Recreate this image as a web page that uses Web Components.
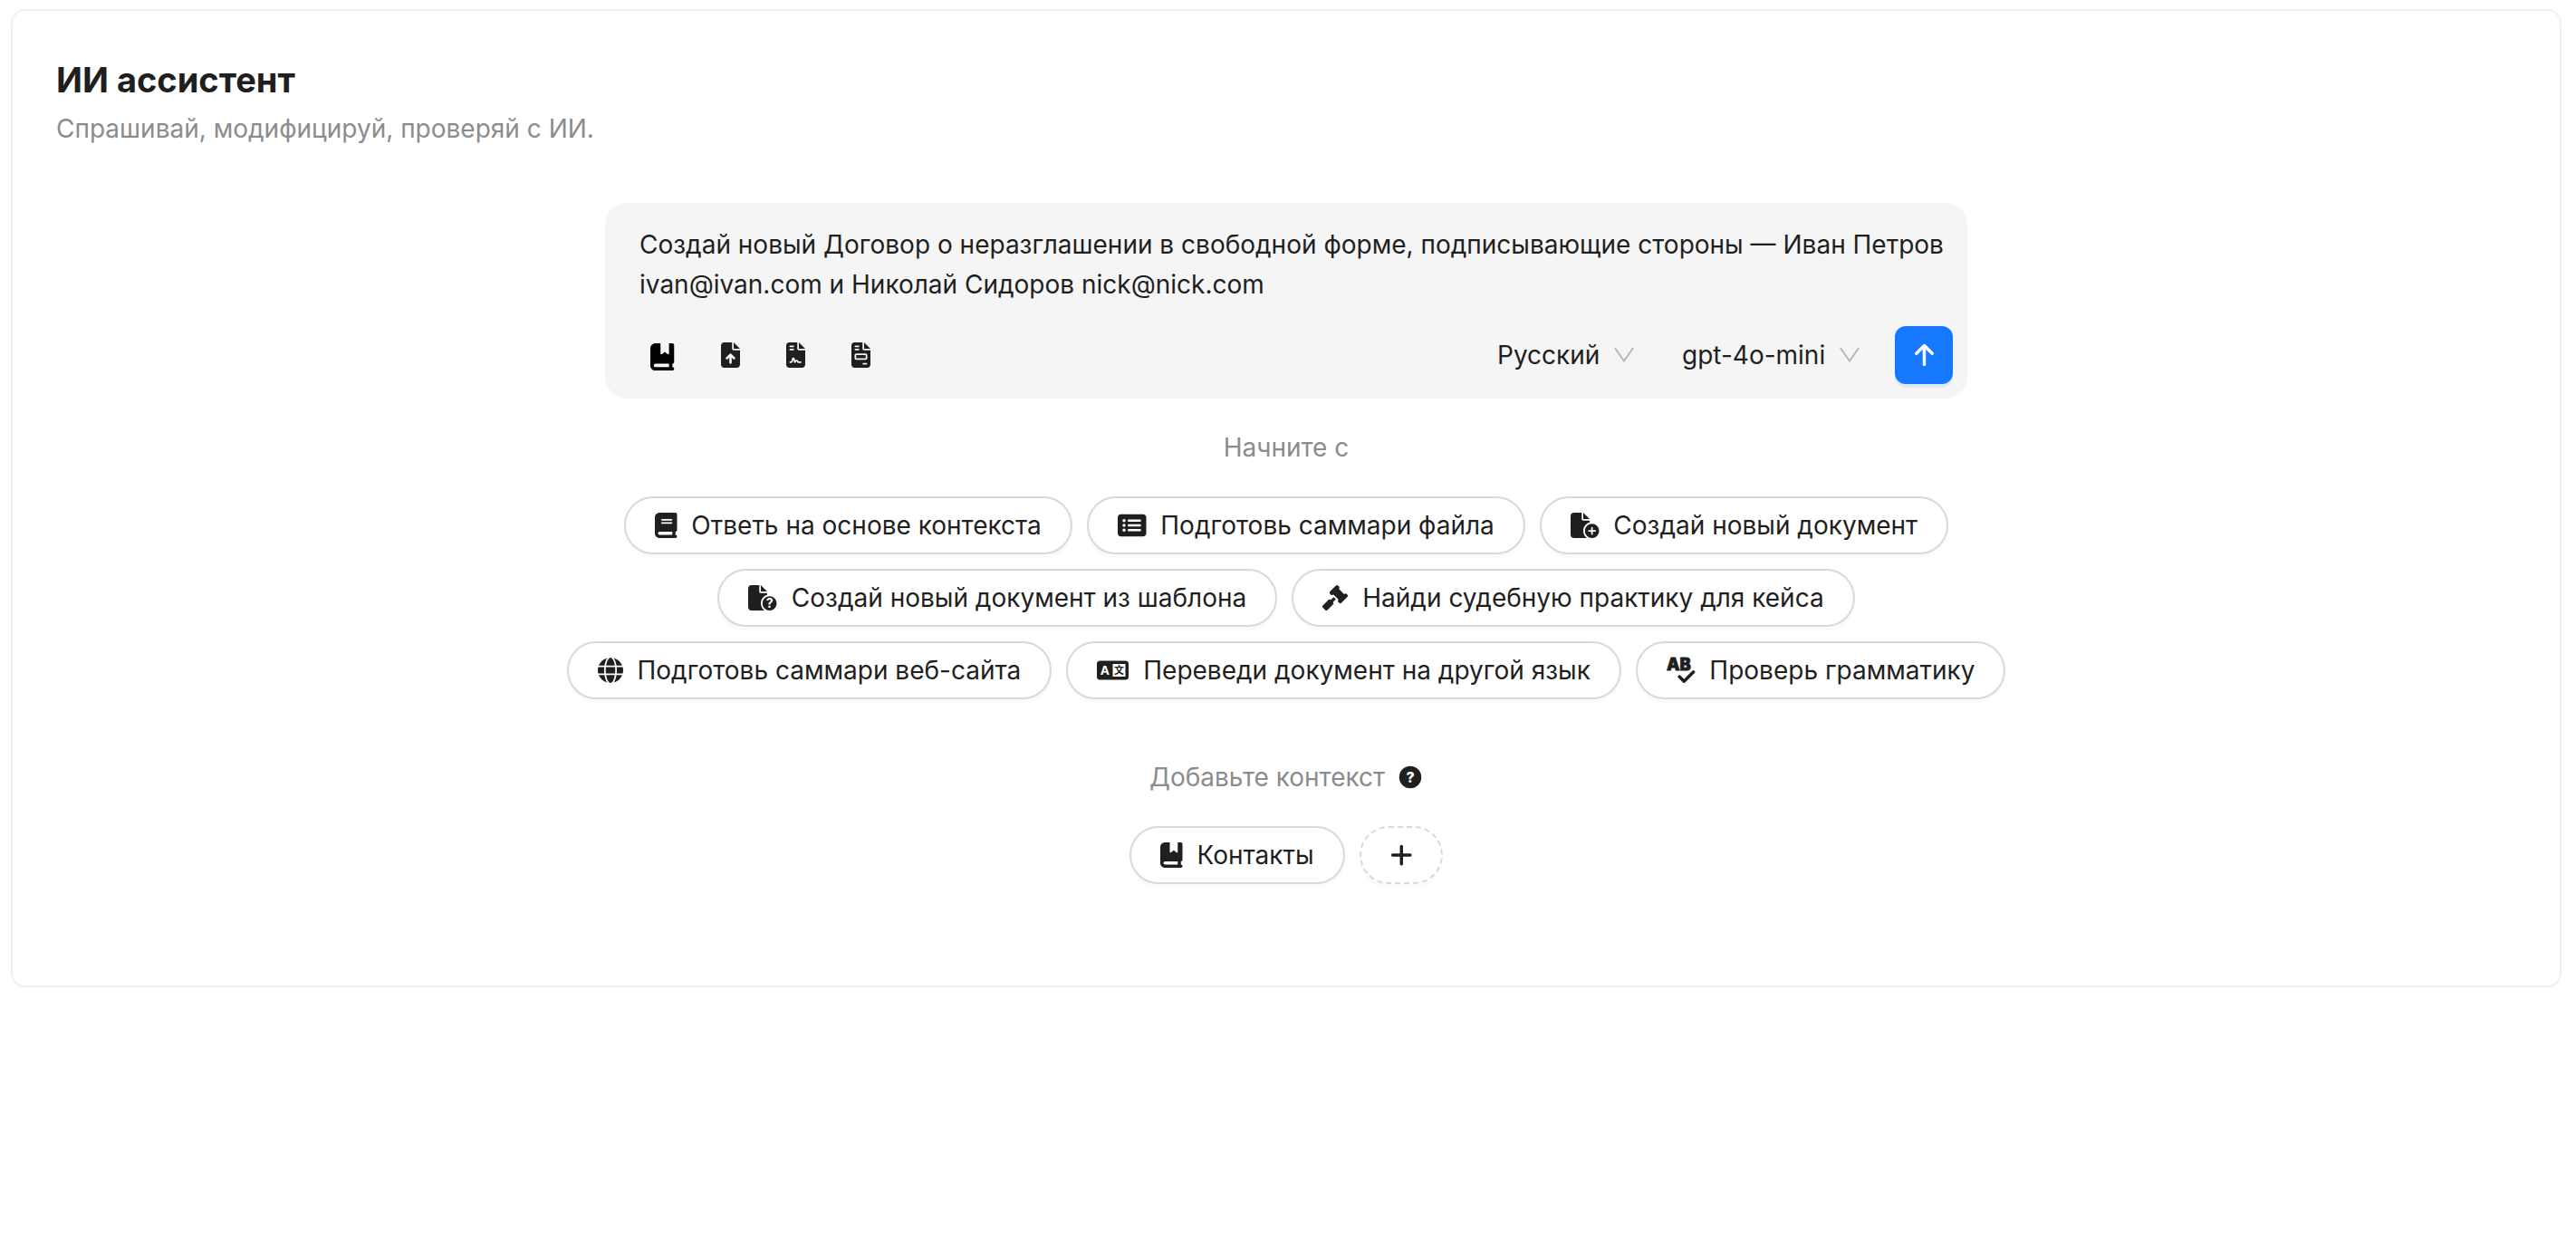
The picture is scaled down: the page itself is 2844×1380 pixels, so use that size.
<!DOCTYPE html>
<html lang="ru">
<head>
<meta charset="utf-8">
<title>ИИ ассистент</title>
<style>
  body {
    margin: 10px 16px 10px 12px;
    background: #fff;
    color: #1f1f1f;
    font: 400 28px/44px Inter, "Noto Sans", sans-serif;
    --muted: #8c8c8c;
    --line: #d9d9d9;
    --primary: #1677ff;
  }
</style>
</head>
<body>
<assistant-card>
  <span slot="title">ИИ ассистент</span>
  <span slot="subtitle">Спрашивай, модифицируй, проверяй с ИИ.</span>
  <prompt-composer></prompt-composer>
  <chip-section>
    <span slot="label">Начните с</span>
    <chip-button icon="book">Ответь на основе контекста</chip-button>
    <chip-button icon="list">Подготовь саммари файла</chip-button>
    <chip-button icon="file-plus">Создай новый документ</chip-button>
    <chip-button icon="file-question">Создай новый документ из шаблона</chip-button>
    <chip-button icon="gavel">Найди судебную практику для кейса</chip-button>
    <chip-button icon="globe">Подготовь саммари веб-сайта</chip-button>
    <chip-button icon="language">Переведи документ на другой язык</chip-button>
    <chip-button icon="spell-check">Проверь грамматику</chip-button>
  </chip-section>
  <chip-section class="context">
    <span slot="label">Добавьте контекст</span>
    <fa-icon slot="label" name="help"></fa-icon>
    <chip-button icon="bookmark">Контакты</chip-button>
    <chip-button icon="plus" dashed label="Добавить"></chip-button>
  </chip-section>
</assistant-card>

<script>
const PAGE = 'M64 0C28.7 0 0 28.7 0 64L0 448c0 35.3 28.7 64 64 64l256 0c35.3 0 64-28.7 64-64l0-288-128 0c-17.7 0-32-14.3-32-32L224 0 64 0zM256 0l0 128 128 0L256 0z';
const PAGE_LINES = 'M80 64l64 0c8.8 0 16 7.2 16 16s-7.2 16-16 16L80 96c-8.8 0-16-7.2-16-16s7.2-16 16-16zm0 64l64 0c8.8 0 16 7.2 16 16s-7.2 16-16 16l-64 0c-8.8 0-16-7.2-16-16s7.2-16 16-16z';
const PAGE_BADGE = 'M0 64C0 28.7 28.7 0 64 0L224 0l0 128c0 17.7 14.3 32 32 32l128 0 0 38.6C310.1 219.5 256 287.4 256 368c0 59.1 29.1 111.3 73.7 143.3c-3.2 .5-6.4 .7-9.7 .7L64 512c-35.3 0-64-28.7-64-64L0 64zm384 64l-128 0L256 0 384 128zm48 96a144 144 0 1 1 0 288 144 144 0 1 1 0-288z';
const p = d => `<path fill-rule="evenodd" d="${d}"/>`;

// name: [width of the 512-high view box, markup]
const ICONS = {
  book: [448, p('M96 0C43 0 0 43 0 96L0 416c0 53 43 96 96 96l288 0 32 0c17.7 0 32-14.3 32-32s-14.3-32-32-32l0-64c17.7 0 32-14.3 32-32l0-320c0-17.7-14.3-32-32-32L384 0 96 0zm0 384l256 0 0 64L96 448c-17.7 0-32-14.3-32-32s14.3-32 32-32zm32-240c0-8.8 7.2-16 16-16l192 0c8.8 0 16 7.2 16 16s-7.2 16-16 16l-192 0c-8.8 0-16-7.2-16-16zm16 48l192 0c8.8 0 16 7.2 16 16s-7.2 16-16 16l-192 0c-8.8 0-16-7.2-16-16s7.2-16 16-16z')],
  bookmark: [448, p('M0 96C0 43 43 0 96 0l96 0 0 190.7c0 13.4 15.5 20.9 26 12.5L272 160l54 43.2c10.5 8.4 26 .9 26-12.5L352 0l32 0 32 0c17.7 0 32 14.3 32 32l0 320c0 17.7-14.3 32-32 32l0 64c17.7 0 32 14.3 32 32s-14.3 32-32 32l-32 0L96 512c-53 0-96-43-96-96L0 96zM64 416c0 17.7 14.3 32 32 32l256 0 0-64L96 384c-17.7 0-32 14.3-32 32z')],
  'file-up': [384, p(PAGE + 'M216 408c0 13.3-10.7 24-24 24s-24-10.7-24-24l0-102.1-31 31c-9.4 9.4-24.6 9.4-33.9 0s-9.4-24.6 0-33.9l72-72c9.4-9.4 24.6-9.4 33.9 0l72 72c9.4 9.4 9.4 24.6 0 33.9s-24.6 9.4-33.9 0l-31-31L216 408z')],
  'file-contract': [384, p(PAGE + PAGE_LINES + 'M134.2 381.8c-6.1 20.3-24.8 34.2-46 34.2L80 416c-8.8 0-16-7.2-16-16s7.2-16 16-16l8.2 0c7.1 0 13.3-4.6 15.3-11.4l14.9-49.5c3.4-11.3 13.8-19.1 25.6-19.1s22.2 7.7 25.6 19.1l11.6 38.6c7.4-6.2 16.8-9.7 26.8-9.7c15.9 0 30.4 9 37.5 23.2l4.4 8.8 44.1 0c8.8 0 16 7.2 16 16s-7.2 16-16 16l-54 0c-6.1 0-11.6-3.4-14.3-8.8l-8.8-17.7c-1.7-3.4-5.1-5.5-8.8-5.5s-7.2 2.1-8.8 5.5l-8.8 17.7c-2.9 5.9-9.2 9.4-15.7 8.8s-12.1-5.1-13.9-11.3L144 349l-9.8 32.8z')],
  'file-invoice': [384, p(PAGE + PAGE_LINES + 'M96 224l192 0c17.7 0 32 14.3 32 32l0 64c0 17.7-14.3 32-32 32L96 352c-17.7 0-32-14.3-32-32l0-64c0-17.7 14.3-32 32-32zM96 256l0 64 192 0 0-64L96 256zM240 416l64 0c8.8 0 16 7.2 16 16s-7.2 16-16 16l-64 0c-8.8 0-16-7.2-16-16s7.2-16 16-16z')],
  'file-plus': [576, p(PAGE_BADGE + 'M448 304c0-8.8-7.2-16-16-16s-16 7.2-16 16l0 48-48 0c-8.8 0-16 7.2-16 16s7.2 16 16 16l48 0 0 48c0 8.8 7.2 16 16 16s16-7.2 16-16l0-48 48 0c8.8 0 16-7.2 16-16s-7.2-16-16-16l-48 0 0-48z')],
  'file-question': [576, p(PAGE_BADGE) + '<text x="432" y="462" font-size="260" font-weight="700" text-anchor="middle" fill="#fff">?</text>'],
  list: [576, p('M0 96C0 60.7 28.7 32 64 32l448 0c35.3 0 64 28.7 64 64l0 320c0 35.3-28.7 64-64 64L64 480c-35.3 0-64-28.7-64-64L0 96zM128 288a32 32 0 1 0 0-64 32 32 0 1 0 0 64zm32-128a32 32 0 1 0 -64 0 32 32 0 1 0 64 0zM128 384a32 32 0 1 0 0-64 32 32 0 1 0 0 64zm96-248c-13.3 0-24 10.7-24 24s10.7 24 24 24l224 0c13.3 0 24-10.7 24-24s-10.7-24-24-24l-224 0zm0 96c-13.3 0-24 10.7-24 24s10.7 24 24 24l224 0c13.3 0 24-10.7 24-24s-10.7-24-24-24l-224 0zm0 96c-13.3 0-24 10.7-24 24s10.7 24 24 24l224 0c13.3 0 24-10.7 24-24s-10.7-24-24-24l-224 0z')],
  gavel: [512, p('M318.6 9.4c-12.5-12.5-32.8-12.5-45.3 0l-120 120c-12.5 12.5-12.5 32.8 0 45.3l16 16c12.5 12.5 32.8 12.5 45.3 0l4-4L325.4 293.4l-4 4c-12.5 12.5-12.5 32.8 0 45.3l16 16c12.5 12.5 32.8 12.5 45.3 0l120-120c12.5-12.5 12.5-32.8 0-45.3l-16-16c-12.5-12.5-32.8-12.5-45.3 0l-4 4L330.6 74.6l4-4c12.5-12.5 12.5-32.8 0-45.3l-16-16zm-152 288c-12.5-12.5-32.8-12.5-45.3 0l-112 112c-12.5 12.5-12.5 32.8 0 45.3l48 48c12.5 12.5 32.8 12.5 45.3 0l112-112c12.5-12.5 12.5-32.8 0-45.3l-1.4-1.4L272 285.3 226.7 240 168 298.7l-1.4-1.4z')],
  globe: [512, p('M352 256c0 22.2-1.2 43.6-3.3 64l-185.3 0c-2.2-20.4-3.3-41.8-3.3-64s1.2-43.6 3.3-64l185.3 0c2.2 20.4 3.3 41.8 3.3 64zm28.8-64l123.1 0c5.3 20.5 8.1 41.9 8.1 64s-2.8 43.5-8.1 64l-123.1 0c2.1-20.6 3.2-42 3.2-64s-1.1-43.4-3.2-64zm112.6-32l-116.7 0c-10-63.9-29.8-117.4-55.3-151.6c78.3 20.7 142 77.5 171.9 151.6zm-149.1 0l-176.6 0c6.1-36.4 15.5-68.6 27-94.7c10.5-23.6 22.2-40.7 33.5-51.5C239.4 3.2 248.7 0 256 0s16.6 3.2 27.8 13.8c11.3 10.8 23 27.9 33.5 51.5c11.6 26 20.9 58.2 27 94.7zm-209 0L18.6 160C48.6 85.9 112.2 29.1 190.6 8.4C165.1 42.6 145.3 96.1 135.3 160zM8.1 192l123.1 0c-2.1 20.6-3.2 42-3.2 64s1.1 43.4 3.2 64L8.1 320C2.8 299.5 0 278.1 0 256s2.8-43.5 8.1-64zM194.7 446.6c-11.6-26-20.9-58.2-27-94.6l176.6 0c-6.1 36.4-15.5 68.6-27 94.6c-10.5 23.6-22.2 40.7-33.5 51.5C272.6 508.8 263.3 512 256 512s-16.6-3.2-27.8-13.8c-11.3-10.8-23-27.9-33.5-51.5zM135.3 352c10 63.9 29.8 117.4 55.3 151.6C112.2 482.9 48.6 426.1 18.6 352l116.7 0zm358.1 0c-30 74.1-93.6 130.9-171.9 151.6c25.5-34.2 45.2-87.7 55.3-151.6l116.7 0z')],
  language: [640, p('M64 64h512a64 64 0 0 1 64 64v256a64 64 0 0 1-64 64H64a64 64 0 0 1-64-64V128a64 64 0 0 1 64-64zM320 128v256h256V128z')
    + '<text x="160" y="347" font-size="250" font-weight="700" text-anchor="middle" fill="#fff">A</text><text x="448" y="330" font-size="200" font-weight="700" text-anchor="middle" font-family="Noto Sans CJK SC, sans-serif">文</text>'],
  'spell-check': [576, '<text x="0" y="252" font-size="336" font-weight="900" stroke="currentColor" stroke-width="14" stroke-linejoin="round">AB</text><path d="M258 384l94 94 190-190" fill="none" stroke="currentColor" stroke-width="64" stroke-linecap="round" stroke-linejoin="round"/>'],
  plus: [448, p('M256 80c0-17.7-14.3-32-32-32s-32 14.3-32 32V224H48c-17.7 0-32 14.3-32 32s14.3 32 32 32H192V432c0 17.7 14.3 32 32 32s32-14.3 32-32V288H400c17.7 0 32-14.3 32-32s-14.3-32-32-32H256V80z')],
  'arrow-up': [384, p('M214.6 41.4c-12.5-12.5-32.8-12.5-45.3 0l-160 160c-12.5 12.5-12.5 32.8 0 45.3s32.8 12.5 45.3 0L160 141.2 160 448c0 17.7 14.3 32 32 32s32-14.3 32-32l0-306.7L329.4 246.6c12.5 12.5 32.8 12.5 45.3 0s12.5-32.8 0-45.3l-160-160z')],
  help: [512, '<circle cx="256" cy="256" r="224"/><text x="256" y="362" font-size="290" font-weight="800" text-anchor="middle" fill="#fff">?</text>'],
  chevron: [512, '<path d="M42 90L256 396 470 90" fill="none" stroke="currentColor" stroke-width="44"/>'],
};

function define(name, html, setup) {
  const template = document.createElement('template');
  template.innerHTML = html;
  customElements.define(name, class extends HTMLElement {
    connectedCallback() {
      if (this.shadowRoot) return;
      this.attachShadow({ mode: 'open' }).append(template.content.cloneNode(true));
      if (setup) setup(this, this.shadowRoot);
    }
  });
}

function makeIcon(name) {
  const icon = document.createElement('fa-icon');
  icon.setAttribute('name', name);
  return icon;
}

define('fa-icon', `
  <style>
    :host { display: inline-flex; flex: none; height: var(--icon-size, 28px); color: inherit; }
    svg { display: block; height: 100%; width: auto; fill: currentColor; overflow: visible; }
  </style>
  <svg aria-hidden="true"></svg>`,
  (host, root) => {
    const [width, markup] = ICONS[host.getAttribute('name')];
    const svg = root.querySelector('svg');
    svg.setAttribute('viewBox', `0 0 ${width} 512`);
    svg.innerHTML = markup;
  });

define('chip-button', `
  <style>
    :host { display: inline-flex; }
    button {
      display: inline-flex; align-items: center; gap: 16px;
      height: 64px; box-sizing: border-box; margin: 0; padding: 0 32px;
      border: 2px solid var(--line); border-radius: 32px; background: #fff;
      box-shadow: 0 4px 0 rgba(0, 0, 0, .02);
      color: inherit; font: inherit; white-space: nowrap; cursor: pointer;
    }
    :host([dashed]) button { border-style: dashed; gap: 0; }
  </style>
  <button type="button"><slot></slot></button>`,
  (host, root) => {
    const button = root.querySelector('button');
    button.prepend(makeIcon(host.getAttribute('icon')));
    if (host.hasAttribute('label')) button.setAttribute('aria-label', host.getAttribute('label'));
  });

define('chip-section', `
  <style>
    :host { display: flex; flex-direction: column; align-items: center; gap: 32px; margin-top: 32px; }
    :host(.context) { margin-top: 64px; }
    .label { display: flex; align-items: center; gap: 14px; }
    ::slotted(span) { color: var(--muted); }
    .chips { display: flex; flex-wrap: wrap; justify-content: center; gap: 16px; max-width: 1600px; }
  </style>
  <div class="label"><slot name="label"></slot></div>
  <div class="chips"><slot></slot></div>`);

define('quiet-select', `
  <style>
    :host { display: inline-grid; align-items: center; height: 64px; }
    select, fa-icon { grid-area: 1 / 1; }
    select {
      appearance: none; margin: 0; height: 64px; padding: 0 60px 0 22px;
      border: 0; background: transparent; color: inherit; font: inherit; cursor: pointer;
    }
    fa-icon { --icon-size: 24px; justify-self: end; margin-right: 22px; color: #b8b8b8; pointer-events: none; }
  </style>
  <select><option></option></select>
  <fa-icon name="chevron"></fa-icon>`,
  (host, root) => {
    root.querySelector('option').textContent = host.getAttribute('value');
    root.querySelector('select').setAttribute('aria-label', host.getAttribute('label'));
  });

define('tool-button', `
  <style>
    :host { display: inline-flex; }
    button {
      display: inline-flex; align-items: center; justify-content: center; box-sizing: border-box;
      width: 56px; height: 64px; margin: 0; padding: 0;
      border: 0; border-radius: 12px; background: transparent; color: inherit; cursor: pointer;
    }
    :host([primary]) button {
      width: 64px; background: var(--primary); color: #fff;
      box-shadow: 0 4px 0 rgba(5, 145, 255, .1);
    }
    :host([strong]) button { width: 62px; padding-top: 4px; color: #000; --icon-size: 30px; }
  </style>
  <button type="button"></button>`,
  (host, root) => {
    const button = root.querySelector('button');
    button.setAttribute('aria-label', host.getAttribute('label'));
    button.append(makeIcon(host.getAttribute('icon')));
  });

define('prompt-composer', `
  <style>
    :host {
      display: block; box-sizing: border-box; width: 100%; max-width: 1504px;
      margin: 60px auto 0; border-radius: 24px; background: #f5f5f5;
    }
    textarea {
      display: block; box-sizing: border-box; width: 100%; margin: 0; padding: 24px 16px 24px 38px;
      border: 0; outline: 0; resize: none; overflow: hidden; background: transparent;
      color: inherit; font: inherit;
    }
    .bar { display: flex; align-items: center; justify-content: space-between; padding: 0 16px 16px 32px; }
    .tools, .options { display: flex; align-items: center; }
    .tools { gap: 16px; }
    .options { gap: 8px; }
    tool-button[primary] { margin-left: 8px; }
  </style>
  <textarea rows="2" aria-label="Запрос">Создай новый Договор о неразглашении в свободной форме, подписывающие стороны — Иван Петров ivan@ivan.com и Николай Сидоров nick@nick.com</textarea>
  <div class="bar">
    <div class="tools">
      <tool-button icon="bookmark" strong label="Контекст"></tool-button>
      <tool-button icon="file-up" label="Загрузить файл"></tool-button>
      <tool-button icon="file-contract" label="Договор"></tool-button>
      <tool-button icon="file-invoice" label="Шаблон"></tool-button>
    </div>
    <div class="options">
      <quiet-select value="Русский" label="Язык"></quiet-select>
      <quiet-select value="gpt-4o-mini" label="Модель"></quiet-select>
      <tool-button icon="arrow-up" primary label="Отправить"></tool-button>
    </div>
  </div>`);

define('assistant-card', `
  <style>
    :host {
      display: block; box-sizing: border-box; padding: 48px 48px 112px;
      border: 2px solid #f0f0f0; border-radius: 16px; background: #fff;
    }
    h1 { margin: 0 0 4px; font-size: 38px; line-height: 56px; font-weight: 700; }
    p { margin: 0; color: var(--muted); }
  </style>
  <header>
    <h1><slot name="title"></slot></h1>
    <p><slot name="subtitle"></slot></p>
  </header>
  <slot></slot>`);
</script>
</body>
</html>
